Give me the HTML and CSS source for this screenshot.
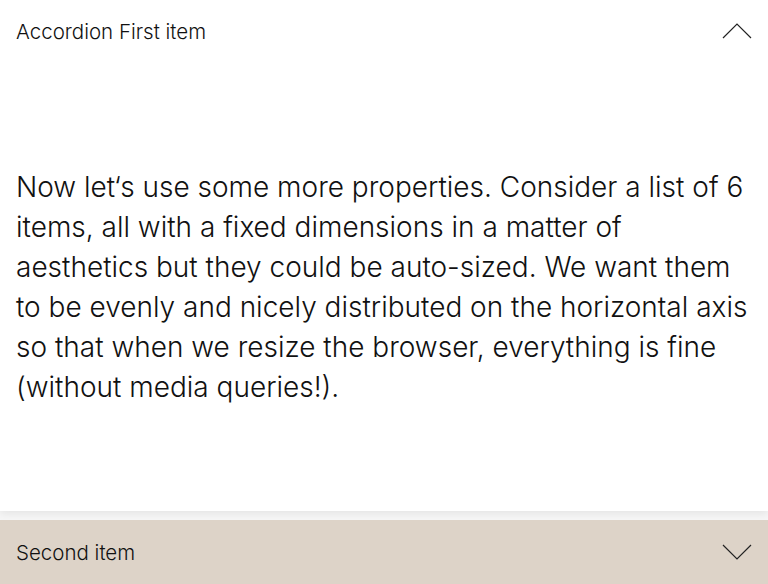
FILE: index.html
```
<!DOCTYPE html>
<html>
<head>
<meta charset="utf-8">
<link rel="stylesheet" href="styles.css">
</head>
<body>
<div class="accordion">
  <section class="item open">
    <div class="head">
      <span class="title">Accordion First item</span>
      <svg class="chev" width="30" height="16" viewBox="0 0 30 16"><polyline points="1,15 15,1 29,15" fill="none" stroke="#222" stroke-width="1.2"/></svg>
    </div>
    <div class="body">
      <p class="text">Now let‘s use some more properties. Consider a list of 6 items, all with a fixed dimensions in a matter of aesthetics but they could be auto-sized. We want them to be evenly and nicely distributed on the horizontal axis so that when we resize the browser, everything is fine (without media queries!).</p>
    </div>
  </section>
  <section class="item closed">
    <div class="head">
      <span class="title">Second item</span>
      <svg class="chev" width="30" height="16" viewBox="0 0 30 16"><polyline points="1,1 15,15 29,1" fill="none" stroke="#222" stroke-width="1.2"/></svg>
    </div>
  </section>
</div>
</body>
</html>
```
FILE: styles.css
```
html, body { margin: 0; padding: 0; }
body {
  background: #f6f6f6;
  font-family: Inter, "Liberation Sans", sans-serif;
  color: #111;
  width: 768px;
  height: 584px;
  overflow: hidden;
}
.accordion { display: flex; flex-direction: column; gap: 9px; }
.item.open { background: #fff; box-shadow: 0 3px 8px rgba(0,0,0,0.07); }
.item.closed { background: #ddd3c8; }
.head {
  height: 62px;
  display: flex;
  align-items: center;
  justify-content: space-between;
  padding: 0 16px;
}
.title { font-size: 20.5px; font-weight: 300; }
.chev { display: block; }
.body { padding: 105px 16px 104px; }
.text { margin: 0; font-size: 28px; line-height: 40px; font-weight: 300; }
.closed .head { height: 64px; }
```
